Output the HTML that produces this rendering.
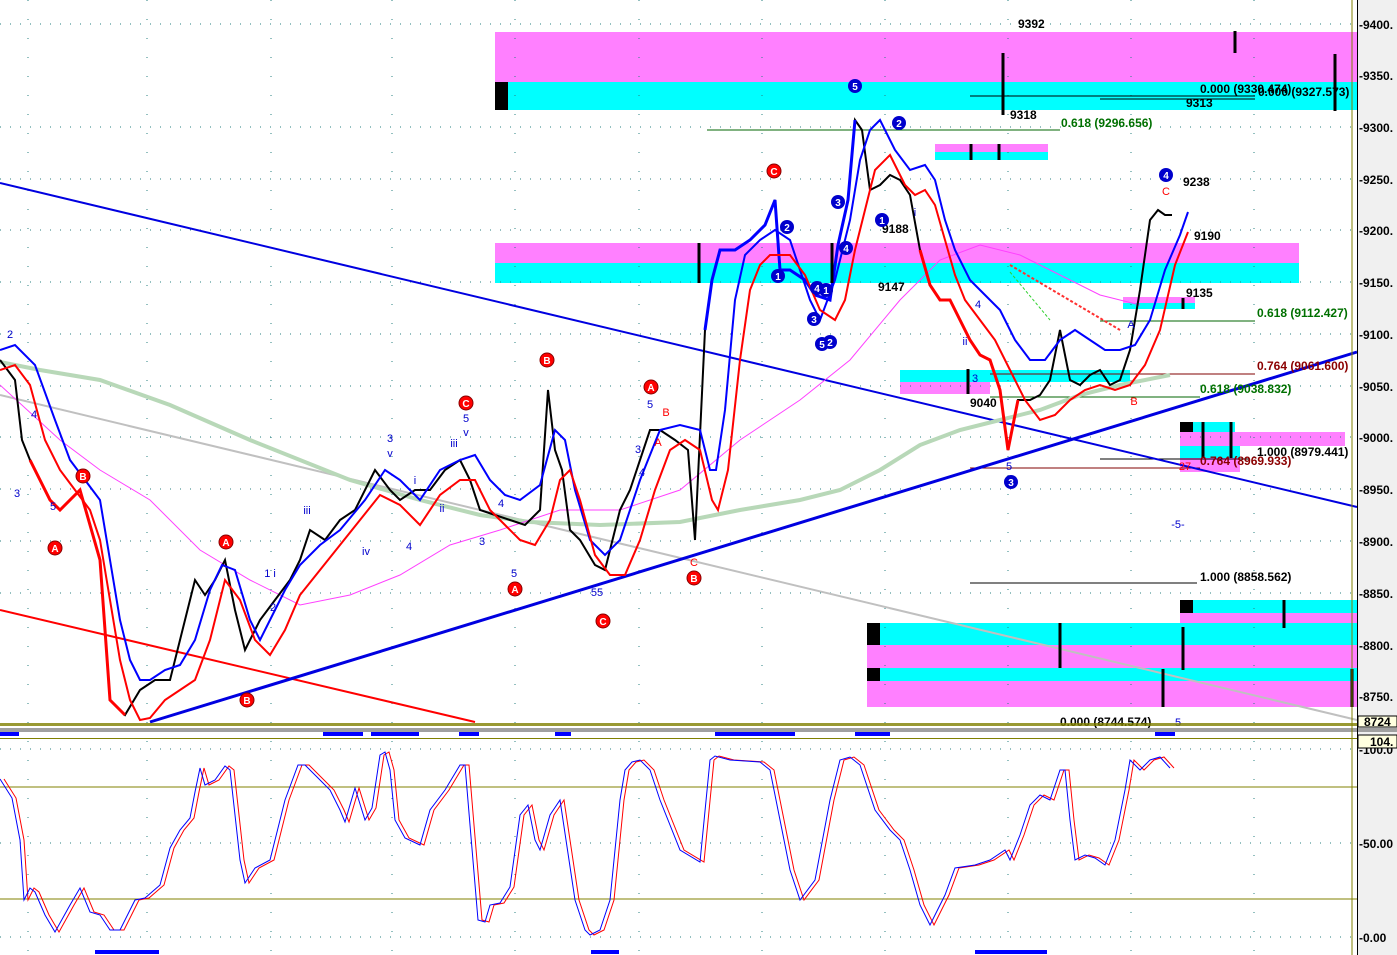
<!DOCTYPE html>
<html><head><meta charset="utf-8"><style>
html,body{margin:0;padding:0;background:#fff;}
svg{display:block;font-family:"Liberation Sans",sans-serif;}
.ax{font-size:12px;font-weight:bold;fill:#000}
.lb{font-size:12px;font-weight:bold}
</style></head><body>
<svg width="1397" height="955" viewBox="0 0 1397 955" xmlns="http://www.w3.org/2000/svg">
<rect x="0" y="0" width="1397" height="955" fill="#fff"/>
<rect x="1358" y="0" width="39" height="955" fill="#f0f0f0"/>
<rect x="495" y="32" width="862" height="50" fill="#ff80ff"/>
<rect x="495" y="82" width="862" height="28" fill="#00ffff"/>
<rect x="495" y="82" width="13" height="28" fill="#000"/>
<rect x="495" y="243" width="804" height="20" fill="#ff80ff"/>
<rect x="495" y="263" width="804" height="20" fill="#00ffff"/>
<rect x="935" y="144" width="113" height="8" fill="#ff80ff"/>
<rect x="935" y="152" width="113" height="8" fill="#00ffff"/>
<rect x="900" y="370" width="230" height="12" fill="#00ffff"/>
<rect x="900" y="382" width="90" height="12" fill="#ff80ff"/>
<rect x="1123" y="297" width="72" height="6" fill="#ff80ff"/>
<rect x="1123" y="303" width="72" height="6" fill="#00ffff"/>
<rect x="1180" y="422" width="55" height="10" fill="#00ffff"/>
<rect x="1180" y="432" width="165" height="14" fill="#ff80ff"/>
<rect x="1180" y="446" width="60" height="12" fill="#00ffff"/>
<rect x="1180" y="458" width="60" height="14" fill="#ff80ff"/>
<rect x="1180" y="600" width="177" height="13" fill="#00ffff"/>
<rect x="1180" y="613" width="177" height="10" fill="#ff80ff"/>
<rect x="867" y="623" width="490" height="22" fill="#00ffff"/>
<rect x="867" y="645" width="490" height="23" fill="#ff80ff"/>
<rect x="867" y="668" width="490" height="13" fill="#00ffff"/>
<rect x="867" y="681" width="490" height="26" fill="#ff80ff"/>
<rect x="867" y="623" width="13" height="22" fill="#000"/>
<rect x="867" y="668" width="13" height="13" fill="#000"/>
<rect x="1180" y="600" width="13" height="13" fill="#000"/>
<rect x="1180" y="422" width="13" height="10" fill="#000"/>
<g stroke="#2a8080" stroke-width="1" stroke-dasharray="1 9">
<line x1="0" y1="24" x2="1352" y2="24"/><line x1="0" y1="127" x2="1352" y2="127"/><line x1="0" y1="179" x2="1352" y2="179"/><line x1="0" y1="230" x2="1352" y2="230"/><line x1="0" y1="282" x2="1352" y2="282"/><line x1="0" y1="334" x2="1352" y2="334"/><line x1="0" y1="386" x2="1352" y2="386"/><line x1="0" y1="437" x2="1352" y2="437"/><line x1="0" y1="489" x2="1352" y2="489"/><line x1="0" y1="541" x2="1352" y2="541"/><line x1="0" y1="593" x2="1352" y2="593"/><line x1="0" y1="749" x2="1352" y2="749"/><line x1="0" y1="843" x2="1352" y2="843"/><line x1="0" y1="937" x2="1352" y2="937"/>
</g>
<g stroke="#2a8080" stroke-dasharray="1 18">
<line x1="28" y1="0" x2="28" y2="955"/><line x1="147" y1="0" x2="147" y2="955"/><line x1="271" y1="0" x2="271" y2="955"/><line x1="392" y1="0" x2="392" y2="955"/><line x1="515" y1="0" x2="515" y2="955"/><line x1="639" y1="0" x2="639" y2="955"/><line x1="762" y1="0" x2="762" y2="955"/><line x1="885" y1="0" x2="885" y2="955"/><line x1="1008" y1="0" x2="1008" y2="955"/><line x1="1131" y1="0" x2="1131" y2="955"/><line x1="1254" y1="0" x2="1254" y2="955"/>
</g>
<g stroke-width="1">
<line x1="707" y1="130" x2="1060" y2="130" stroke="#006400"/>
<line x1="970" y1="96" x2="1255" y2="96" stroke="#000"/>
<line x1="1100" y1="99" x2="1255" y2="99" stroke="#000"/>
<line x1="1100" y1="321" x2="1255" y2="321" stroke="#006400"/>
<line x1="990" y1="374" x2="1255" y2="374" stroke="#800000"/>
<line x1="990" y1="397" x2="1200" y2="397" stroke="#006400"/>
<line x1="970" y1="468" x2="1200" y2="468" stroke="#800000"/>
<line x1="1100" y1="459" x2="1250" y2="459" stroke="#000"/>
<line x1="970" y1="583" x2="1197" y2="583" stroke="#000"/>
</g>
<line x1="0" y1="183" x2="1357" y2="507" stroke="#0000e0" stroke-width="2"/>
<line x1="0" y1="395" x2="1357" y2="720" stroke="#c0c0c0" stroke-width="2"/>
<line x1="0" y1="610" x2="475" y2="722" stroke="#ff0000" stroke-width="2"/>
<line x1="150" y1="722" x2="1357" y2="352" stroke="#0000e0" stroke-width="3"/>
<polyline fill="none" stroke="#b8d8b8" stroke-width="4" points="0,362 40,370 100,380 170,405 250,440 350,480 420,500 480,515 530,522 600,525 680,522 740,510 800,500 840,490 880,470 920,445 960,430 1000,420 1040,410 1080,395 1120,385 1170,375"/>
<polyline fill="none" stroke="#ff40ff" stroke-width="1" points="0,385 60,440 100,470 150,500 200,550 250,580 300,605 350,595 400,575 450,545 500,530 560,510 620,510 680,490 740,440 800,400 850,360 900,300 940,260 980,245 1020,255 1060,275 1100,295 1140,305"/>
<polyline fill="none" stroke="#000" stroke-width="2" points="0,360 15,380 22,440 30,460 50,500 60,510 80,490 100,560 110,700 125,715 140,690 155,680 170,680 185,620 195,580 205,595 215,580 225,560 235,610 245,650 260,620 275,600 290,580 300,560 310,530 325,540 340,520 355,510 375,470 390,490 400,500 415,490 430,490 445,470 460,460 470,480 480,510 495,515 510,520 525,525 540,510 548,390 555,450 562,470 570,530 580,540 595,565 605,570 620,510 630,490 640,460 650,430 660,430 675,440 688,450 695,540 705,330 712,280 720,250 735,250 750,240 765,225 775,200 780,270 790,270 805,280 815,295 830,300 838,245 848,200 855,120 862,130 870,190 880,185 890,175 900,180 910,195 920,250 930,285 940,300 950,300 960,320 970,340 980,355 990,360 1000,390 1008,450 1018,400 1030,400 1040,395 1050,380 1060,330 1070,380 1080,385 1090,375 1100,370 1110,385 1120,380 1130,350 1140,290 1150,220 1158,210 1165,215 1172,215"/>
<polyline fill="none" stroke="#0000ff" stroke-width="3" points="705,330 712,280 720,250 735,250 750,240 765,225 775,200 780,270 790,270 805,280 815,295 830,300 838,245 848,200 855,120"/>
<polyline fill="none" stroke="#ff0000" stroke-width="3" points="920,250 930,285 940,300 950,300 960,320 970,340 980,355 990,360 1000,390 1008,450 1018,400"/>
<polyline fill="none" stroke="#ff0000" stroke-width="3" points="30,460 50,500 60,510 80,490 100,560 110,700 125,715"/>
<polyline fill="none" stroke="#0000ff" stroke-width="2" points="0,350 15,345 35,365 55,420 70,460 85,480 100,500 110,560 120,620 130,660 140,680 150,680 165,670 180,665 195,640 210,590 222,565 235,570 250,620 260,640 270,620 285,590 300,565 320,545 340,530 365,500 385,470 400,480 420,500 440,470 460,460 475,455 490,480 505,495 520,500 540,485 555,430 565,440 575,490 590,540 605,555 620,540 640,480 660,430 680,425 700,430 710,470 716,470 725,410 735,300 745,255 760,240 775,230 790,240 800,270 810,300 820,320 835,280 850,220 860,160 870,130 880,120 895,150 910,170 925,165 935,180 945,220 955,250 970,280 985,295 1000,310 1015,340 1030,360 1045,360 1060,340 1075,330 1090,340 1105,350 1120,350 1135,345 1150,320 1165,270 1180,235 1188,212"/>
<polyline fill="none" stroke="#ff0000" stroke-width="2" points="0,370 15,365 30,385 45,440 60,470 75,490 90,510 100,540 110,600 120,660 130,700 140,720 150,718 165,700 180,690 195,680 210,640 225,580 240,600 255,640 270,655 285,630 300,595 320,570 340,545 360,520 380,495 400,505 420,525 440,495 460,480 475,480 490,510 505,525 520,540 535,545 550,520 560,480 570,470 580,500 595,555 610,575 625,575 640,540 655,490 670,450 685,440 700,450 712,500 718,510 728,470 740,360 750,290 760,265 770,255 790,255 805,275 820,310 835,320 845,300 855,250 865,210 875,170 890,155 905,185 915,195 925,190 935,205 945,240 955,275 965,300 980,320 995,340 1010,370 1025,400 1040,420 1055,415 1070,400 1085,390 1100,385 1115,390 1130,385 1145,365 1160,330 1175,265 1188,232"/>
<line x1="1010" y1="265" x2="1120" y2="330" stroke="#ff3030" stroke-width="2" stroke-dasharray="3 2"/>
<line x1="1010" y1="272" x2="1050" y2="320" stroke="#30d030" stroke-width="1" stroke-dasharray="3 2"/>
<g stroke="#000" stroke-width="3">
<line x1="1003" y1="53" x2="1003" y2="115"/><line x1="1235" y1="31" x2="1235" y2="53"/><line x1="1335" y1="54" x2="1335" y2="111"/>
<line x1="971" y1="144" x2="971" y2="160"/><line x1="999" y1="144" x2="999" y2="160"/>
<line x1="699" y1="243" x2="699" y2="283"/><line x1="832" y1="243" x2="832" y2="283"/><line x1="968" y1="369" x2="968" y2="394"/>
<line x1="1183" y1="298" x2="1183" y2="309"/><line x1="1203" y1="422" x2="1203" y2="458"/><line x1="1231" y1="422" x2="1231" y2="458"/>
<line x1="1060" y1="623" x2="1060" y2="668"/><line x1="1183" y1="627" x2="1183" y2="670"/><line x1="1163" y1="669" x2="1163" y2="707"/><line x1="1284" y1="600" x2="1284" y2="628"/><line x1="1352" y1="669" x2="1352" y2="707"/>
</g>
<g class="lb" fill="#000">
<text x="1018" y="28">9392</text><text x="1010" y="119">9318</text><text x="1186" y="107">9313</text>
<text x="1200" y="93">0.000 (9330.474)</text><text x="1258" y="96">0.000 (9327.573)</text>
<text x="1183" y="186">9238</text><text x="1194" y="240">9190</text><text x="1186" y="297">9135</text>
<text x="882" y="233">9188</text><text x="878" y="291">9147</text><text x="970" y="407">9040</text>
<text x="1257" y="456">1.000 (8979.441)</text><text x="1200" y="581">1.000 (8858.562)</text>
<text x="1060" y="726">0.000 (8744.574)</text>
</g>
<g class="lb" fill="#007000">
<text x="1061" y="127">0.618 (9296.656)</text><text x="1257" y="317">0.618 (9112.427)</text><text x="1200" y="393">0.618 (9038.832)</text>
</g>
<g class="lb" fill="#8b0000">
<text x="1257" y="370">0.764 (9061.600)</text><text x="1200" y="465">0.764 (8969.933)</text>
</g>
<g font-size="10" font-weight="bold" text-anchor="middle">
<g fill="#0000cc"><circle cx="855" cy="86" r="7"/><circle cx="899" cy="123" r="7"/><circle cx="882" cy="220" r="7"/><circle cx="838" cy="202" r="7"/><circle cx="846" cy="248" r="7"/><circle cx="787" cy="227" r="7"/><circle cx="778" cy="276" r="7"/><circle cx="817" cy="288" r="7"/><circle cx="826" cy="290" r="7"/><circle cx="814" cy="319" r="7"/><circle cx="822" cy="344" r="7"/><circle cx="830" cy="342" r="7"/><circle cx="1166" cy="175" r="7"/><circle cx="1011" cy="482" r="7"/></g>
<g fill="#ff0000" stroke="#800" stroke-width="1"><circle cx="774" cy="171" r="7"/><circle cx="547" cy="360" r="7"/><circle cx="651" cy="387" r="7"/><circle cx="466" cy="403" r="7"/><circle cx="83" cy="476" r="7"/><circle cx="55" cy="548" r="7"/><circle cx="226" cy="542" r="7"/><circle cx="515" cy="589" r="7"/><circle cx="694" cy="578" r="7"/><circle cx="603" cy="621" r="7"/><circle cx="247" cy="700" r="7"/></g>
<g fill="#fff"><text x="855" y="90">5</text><text x="899" y="127">2</text><text x="882" y="224">1</text><text x="838" y="206">3</text><text x="846" y="252">4</text><text x="787" y="231">2</text><text x="778" y="280">1</text><text x="817" y="292">4</text><text x="826" y="294">1</text><text x="814" y="323">3</text><text x="822" y="348">5</text><text x="830" y="346">2</text><text x="1166" y="179">4</text><text x="1011" y="486">3</text>
<text x="774" y="175">C</text><text x="547" y="364">B</text><text x="651" y="391">A</text><text x="466" y="407">C</text><text x="83" y="480">B</text><text x="55" y="552">A</text><text x="226" y="546">A</text><text x="515" y="593">A</text><text x="694" y="582">B</text><text x="603" y="625">C</text><text x="247" y="704">B</text></g>
</g>
<g font-size="11" fill="#0000cc" text-anchor="middle">
<text x="10" y="338">2</text><text x="34" y="418">4</text><text x="17" y="497">3</text><text x="53" y="510">5</text><text x="390" y="442">3</text><text x="390" y="457">v</text><text x="466" y="422">5</text><text x="466" y="436">v</text><text x="454" y="447">iii</text><text x="307" y="514">iii</text><text x="270" y="577">1 i</text><text x="273" y="611">2</text><text x="415" y="484">i</text><text x="442" y="512">ii</text><text x="366" y="555">iv</text><text x="409" y="550">4</text><text x="482" y="545">3</text><text x="514" y="577">5</text><text x="501" y="507">4</text><text x="638" y="453">3</text><text x="642" y="476">4</text><text x="650" y="408">5</text><text x="597" y="596">55</text><text x="1131" y="328">A</text><text x="1009" y="470">5</text><text x="975" y="382">3</text><text x="965" y="345">ii</text><text x="978" y="308">4</text><text x="1178" y="528">-5-</text><text x="1178" y="726">5</text><text x="915" y="216">i</text>
</g>
<g font-size="11" fill="#ff0000" text-anchor="middle"><text x="1166" y="195">C</text><text x="666" y="416">B</text><text x="658" y="446">A</text><text x="1134" y="405">B</text><text x="694" y="566">C</text><text x="1185" y="470">27</text></g>
<rect x="0" y="723" width="1357" height="3" fill="#808000" opacity="0.8"/>
<rect x="0" y="728" width="1397" height="4" fill="#a0a0a0"/>
<rect x="0" y="738" width="1357" height="1" fill="#808000"/>
<g fill="#0000ff">
<rect x="0" y="732" width="19" height="4"/><rect x="323" y="732" width="40" height="4"/><rect x="371" y="732" width="48" height="4"/><rect x="459" y="732" width="20" height="4"/><rect x="555" y="732" width="16" height="4"/><rect x="715" y="732" width="80" height="4"/><rect x="855" y="732" width="35" height="4"/><rect x="1155" y="732" width="20" height="4"/>
<rect x="95" y="950" width="64" height="4"/><rect x="591" y="950" width="28" height="4"/><rect x="975" y="950" width="72" height="4"/>
</g>
<line x1="0" y1="787" x2="1357" y2="787" stroke="#808000"/>
<line x1="0" y1="899" x2="1357" y2="899" stroke="#808000"/>
<polyline fill="none" stroke="#ff0000" stroke-width="1" points="4,779 16,798 24,840 28,900 34,888 39,892 49,915 59,932 74,905 84,888 94,912 104,915 114,930 124,930 139,900 149,898 164,885 174,848 184,830 194,818 199,792 204,768 209,785 219,780 229,766 234,770 244,860 249,883 259,868 274,860 289,800 302,765 309,765 324,780 334,790 344,810 349,822 359,788 369,820 376,808 384,755 389,752 394,770 399,820 409,838 424,845 434,810 449,790 464,765 469,765 474,825 482,920 489,922 494,905 504,903 514,887 524,815 532,805 539,840 544,850 554,815 564,800 579,900 589,930 594,935 604,930 614,900 624,800 629,770 636,762 644,760 654,770 664,800 684,850 704,862 714,760 719,756 734,760 764,762 774,770 784,820 794,870 804,900 819,880 834,800 844,760 854,757 864,765 879,810 894,830 904,840 914,870 924,905 934,925 949,895 959,868 979,865 994,860 1009,850 1014,860 1024,835 1034,805 1044,795 1054,800 1064,770 1069,770 1074,820 1079,860 1089,855 1099,858 1109,865 1119,840 1129,790 1134,760 1144,770 1154,760 1164,757 1174,768"/>
<polyline fill="none" stroke="#0000ff" stroke-width="1" points="0,779 12,798 20,840 24,900 30,888 35,892 45,915 55,932 70,905 80,888 90,912 100,915 110,930 120,930 135,900 145,898 160,885 170,848 180,830 190,818 195,792 200,768 205,785 215,780 225,766 230,770 240,860 245,883 255,868 270,860 285,800 298,765 305,765 320,780 330,790 340,810 345,822 355,788 365,820 372,808 380,755 385,752 390,770 395,820 405,838 420,845 430,810 445,790 460,765 465,765 470,825 478,920 485,922 490,905 500,903 510,887 520,815 528,805 535,840 540,850 550,815 560,800 575,900 585,930 590,935 600,930 610,900 620,800 625,770 632,762 640,760 650,770 660,800 680,850 700,862 710,760 715,756 730,760 760,762 770,770 780,820 790,870 800,900 815,880 830,800 840,760 850,757 860,765 875,810 890,830 900,840 910,870 920,905 930,925 945,895 955,868 975,865 990,860 1005,850 1010,860 1020,835 1030,805 1040,795 1050,800 1060,770 1065,770 1070,820 1075,860 1085,855 1095,858 1105,865 1115,840 1125,790 1130,760 1140,770 1150,760 1160,757 1170,768"/>
<line x1="1352" y1="0" x2="1352" y2="955" stroke="#808000"/>
<line x1="1357.5" y1="0" x2="1357.5" y2="955" stroke="#000"/>
<g class="ax">
<text x="1359" y="29">-9400.</text><text x="1359" y="80">-9350.</text><text x="1359" y="132">-9300.</text><text x="1359" y="184">-9250.</text><text x="1359" y="235">-9200.</text><text x="1359" y="287">-9150.</text><text x="1359" y="339">-9100.</text><text x="1359" y="391">-9050.</text><text x="1359" y="442">-9000.</text><text x="1359" y="494">-8950.</text><text x="1359" y="546">-8900.</text><text x="1359" y="598">-8850.</text><text x="1359" y="650">-8800.</text><text x="1359" y="701">-8750.</text>
<text x="1359" y="754">-100.0</text><text x="1359" y="848">-50.00</text><text x="1359" y="942">-0.00</text>
</g>
<rect x="1358" y="716" width="39" height="11" fill="#ffffe0" stroke="#000"/>
<text x="1364" y="726" class="ax">8724</text>
<rect x="1358" y="735" width="39" height="13" fill="#ffffe0" stroke="#000"/>
<text x="1370" y="746" class="ax">104.</text>
</svg>
</body></html>
